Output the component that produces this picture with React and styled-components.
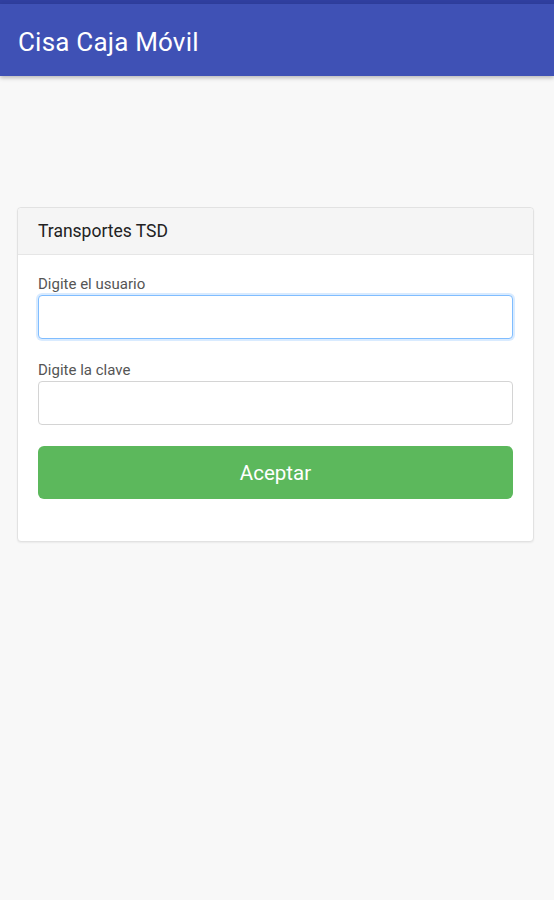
import React from 'react'
import styled, { createGlobalStyle } from 'styled-components'

const Global = createGlobalStyle`
  html, body { margin: 0; padding: 0; background: #f8f8f8; }
  body { font-family: Roboto, "Noto Sans", sans-serif; }
  * { box-sizing: border-box; }
`

const Page = styled.div`
  min-height: 900px;
  background: #f8f8f8;
`
const StatusBar = styled.div`
  height: 4px;
  background: #303f9f;
`
const AppBar = styled.header`
  height: 72px;
  background: #3f51b5;
  display: flex;
  align-items: center;
  padding: 3px 18px 0;
  box-shadow: 0 2px 4px rgba(0, 0, 0, 0.25);
`
const Title = styled.h1`
  margin: 0;
  color: #fff;
  font-size: 26px;
  font-weight: 400;
  letter-spacing: 0.2px;
`
const Content = styled.main`
  padding: 131px 20px 0 17px;
`
const Card = styled.section`
  background: #fff;
  border: 1px solid #e2e2e2;
  border-radius: 4px;
  box-shadow: 0 1px 2px rgba(0, 0, 0, 0.06);
`
const CardHeader = styled.div`
  height: 47px;
  display: flex;
  align-items: center;
  padding: 0 20px;
  background: #f5f5f5;
  border-bottom: 1px solid #e6e6e6;
  color: #222;
  font-size: 17.5px;
  border-radius: 4px 4px 0 0;
`
const CardBody = styled.form`
  padding: 19px 20px 42px;
  display: flex;
  flex-direction: column;
`
const Label = styled.label`
  font-size: 15px;
  color: #555;
  line-height: 20px;
  margin-bottom: 1px;
`
const Input = styled.input`
  height: 44px;
  width: 100%;
  border-radius: 4px;
  border: 1px solid ${p => (p.focused ? '#80bdff' : '#d4d4d4')};
  box-shadow: ${p => (p.focused ? '0 0 0 2px rgba(0, 123, 255, 0.15)' : 'none')};
  margin-bottom: ${p => p.gap}px;
  outline: none;
  font-size: 16px;
  padding: 0 12px;
`
const Button = styled.button`
  height: 53px;
  border: none;
  border-radius: 6px;
  background: #5cb85c;
  color: #fff;
  font-family: Roboto, sans-serif;
  font-size: 20.5px;
`

export default function App() {
  return (
    <Page>
      <Global />
      <StatusBar />
      <AppBar>
        <Title>Cisa Caja Móvil</Title>
      </AppBar>
      <Content>
        <Card>
          <CardHeader>Transportes TSD</CardHeader>
          <CardBody onSubmit={e => e.preventDefault()}>
            <Label>Digite el usuario</Label>
            <Input focused gap={21} />
            <Label>Digite la clave</Label>
            <Input type="password" gap={21} />
            <Button type="submit">Aceptar</Button>
          </CardBody>
        </Card>
      </Content>
    </Page>
  )
}
